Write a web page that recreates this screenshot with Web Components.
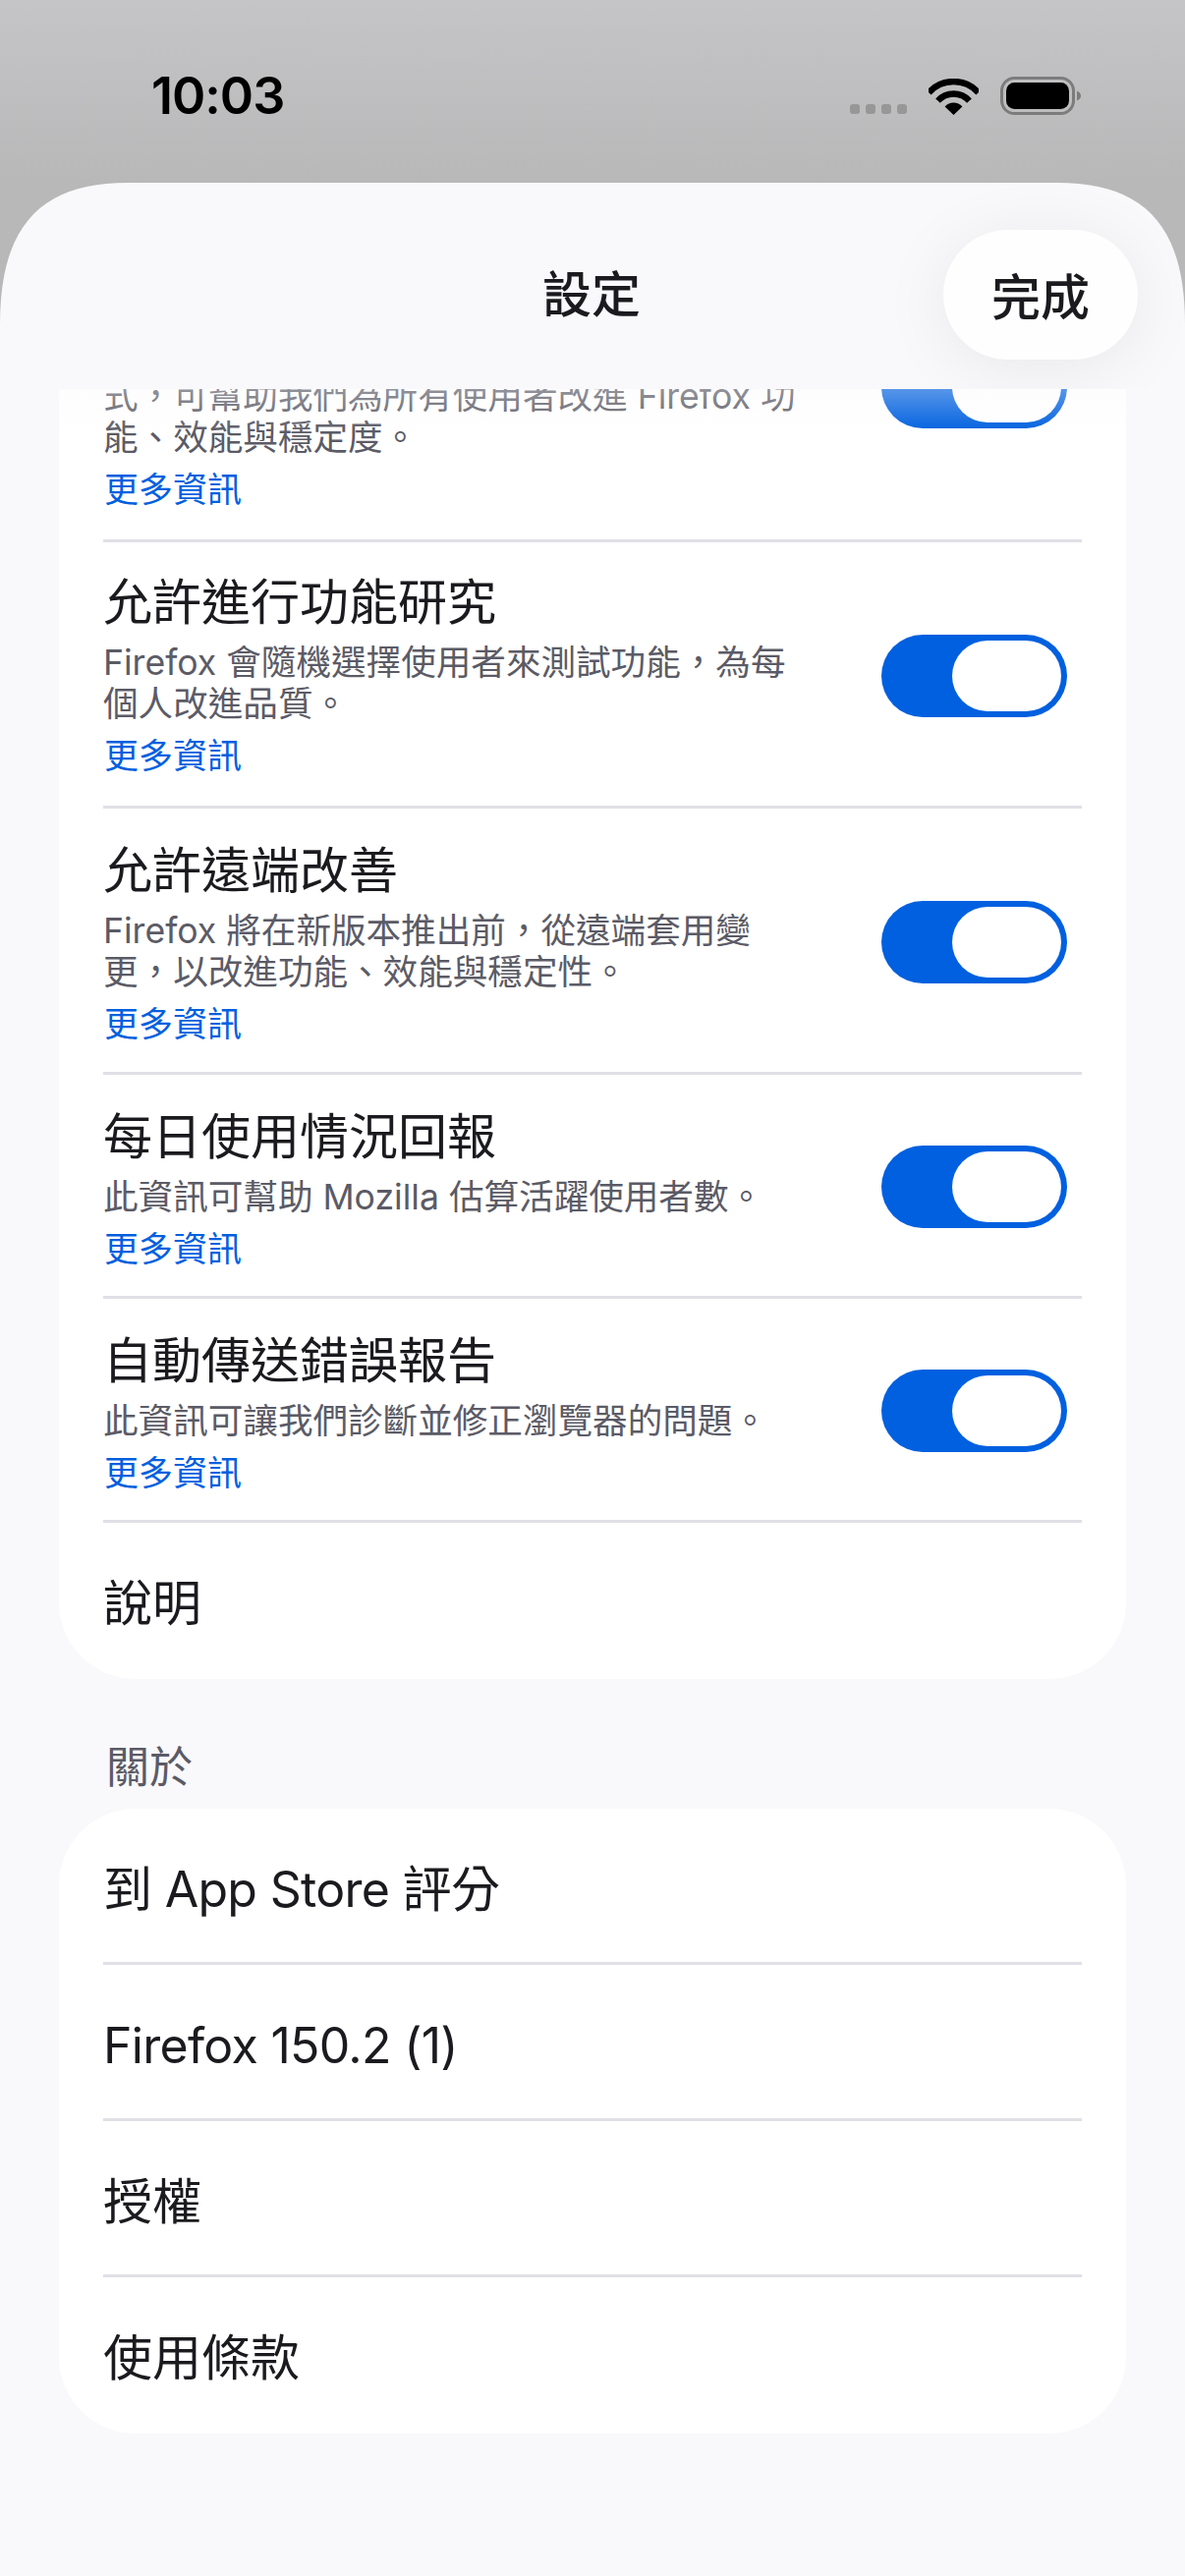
<!DOCTYPE html>
<html lang="zh-Hant">
<head>
<meta charset="utf-8">
<title>設定</title>
<style>
    html, body {
        margin: 0;
        height: 2622px;
        overflow: hidden;
    }

    body {
        display: flex;
        flex-direction: column;
        font-family: Inter, "Noto Sans CJK TC", sans-serif;
        color: #1b1b1f;
        background: linear-gradient(#c5c5c7, #b8b8b9 186px);
    }
</style>
</head>
<body>
<status-bar time="10:03"></status-bar>
<settings-sheet>
    <settings-card>
        <settings-row clipped high toggle>
            式，可幫助我們為所有使用者改進 Firefox 功<br>能、效能與穩定度。
        </settings-row>
        <settings-row high heading="允許進行功能研究" toggle>
            Firefox 會隨機選擇使用者來測試功能，為每<br>個人改進品質。
        </settings-row>
        <settings-row heading="允許遠端改善" toggle>
            Firefox 將在新版本推出前，從遠端套用變<br>更，以改進功能、效能與穩定性。
        </settings-row>
        <settings-row heading="每日使用情況回報" toggle short>
            此資訊可幫助 Mozilla 估算活躍使用者數。
        </settings-row>
        <settings-row heading="自動傳送錯誤報告" toggle short>
            此資訊可讓我們診斷並修正瀏覽器的問題。
        </settings-row>
        <settings-row heading="說明" last></settings-row>
    </settings-card>
    <section-label>關於</section-label>
    <settings-card>
        <settings-row first tight heading="到 App Store 評分"></settings-row>
        <settings-row tight heading="Firefox 150.2 (1)"></settings-row>
        <settings-row heading="授權"></settings-row>
        <settings-row heading="使用條款" last></settings-row>
    </settings-card>
</settings-sheet>

<script>
// status bar - clock, signal dots, wifi, battery
var template_status = document.createElement("template");
template_status.innerHTML = `
<div class="left"><span id="time"></span></div>
<div class="right">
    <div class="dots"><i></i><i></i><i></i><i></i></div>
    <svg width="51" height="37" viewBox="0 0 51 37">
        <path d="M.2 14.3A34 34 0 0 1 50.8 14.3" fill="none" stroke="#000" stroke-width="6.4"/>
        <path d="M9.5 22.6A21.5 21.5 0 0 1 41.5 22.6" fill="none" stroke="#000" stroke-width="6.4"/>
        <path d="M25.5 37L16.6 28.4A12 12 0 0 1 34.4 28.4Z" fill="#000"/>
    </svg>
    <svg class="battery" width="82" height="39" viewBox="0 0 82 39">
        <rect x="1.5" y="1.5" width="73" height="36" rx="13" fill="none" stroke="#7c7c7d" stroke-width="3"/>
        <rect x="6" y="6" width="64" height="27" rx="8.5" fill="#000"/>
        <path d="M78 14.5C80.5 15.5 82 17.2 82 19.5S80.5 23.5 78 24.5Z" fill="#7c7c7d"/>
    </svg>
</div>
<style>
    :host {
        display: flex;
        flex: none;
        justify-content: space-between;
        height: 186px;
        box-sizing: border-box;
        padding: 0 106px 0 154px;
    }
    .left {
        padding-top: 66px;
        font-size: 52px;
        line-height: 64px;
        font-weight: 600;
        letter-spacing: -1px;
        color: #000;
    }
    .right {
        display: flex;
        align-items: flex-end;
        height: 117px;
    }
    .dots {
        display: flex;
        gap: 6px;
        margin: 0 22px 1px 0;
    }
    .dots i {
        width: 10px;
        height: 10px;
        border-radius: 3px;
        background: #979798;
    }
    svg { display: block; }
    .battery { margin-left: 22px; }
</style>
`;

class StatusBar extends HTMLElement {
    constructor(){
        super();
        this.attachShadow({mode:"open"});
    }
    connectedCallback(){
        this.shadowRoot.appendChild(template_status.content.cloneNode(true));
        this.shadowRoot.querySelector("#time").textContent = this.getAttribute("time");
    }
}
customElements.define("status-bar", StatusBar);

// sheet - rounded panel with the header on top, list scrolled under it
var template_sheet = document.createElement("template");
template_sheet.innerHTML = `
<header>
    <div></div>
    <h1>設定</h1>
    <button>完成</button>
</header>
<div class="scroller">
    <div class="fade"></div>
    <div class="list"><slot></slot></div>
</div>
<style>
    :host {
        display: flex;
        flex-direction: column;
        flex: 1;
        min-height: 0;
        overflow: hidden;
        background: #f9f9fb;
        /* squircle top corners, border-radius is too round here */
        clip-path: path("M0 144C0 40 45 0 130 0H1076C1161 0 1206 40 1206 144V2436H0Z");
    }
    header {
        flex: none;
        display: grid;
        grid-template-columns: 1fr auto 1fr;
        align-items: center;
        height: 210px;
        box-sizing: border-box;
        padding: 48px 48px 30px;
        overflow: hidden;
    }
    h1 {
        margin: 0;
        padding-right: 2px;
        font-size: 50px;
        line-height: 60px;
        font-weight: 500;
    }
    button {
        justify-self: end;
        width: 198px;
        height: 132px;
        border: 0;
        padding: 0 0 2px;
        border-radius: 66px;
        background: #fefefe;
        color: inherit;
        font: inherit;
        font-size: 50px;
        font-weight: 500;
        box-shadow: 0 8px 70px rgba(0, 0, 0, .07);
    }
    .scroller {
        position: relative;
        flex: 1;
        min-height: 0;
        overflow: hidden;
    }
    .fade {
        position: absolute;
        z-index: 1;
        top: 0;
        left: 0;
        right: 0;
        height: 45px;
        background: linear-gradient(rgba(249, 249, 251, .35), rgba(249, 249, 251, 0));
    }
    .list {
        margin-top: -160px;
        padding: 0 60px;
    }
</style>
`;

class SettingsSheet extends HTMLElement {
    constructor(){
        super();
        this.attachShadow({mode:"open"});
    }
    connectedCallback(){
        this.shadowRoot.appendChild(template_sheet.content.cloneNode(true));
    }
}
customElements.define("settings-sheet", SettingsSheet);

// card - white group of rows
var template_card = document.createElement("template");
template_card.innerHTML = `
<slot></slot>
<style>
    :host {
        display: block;
        background: #fff;
        border-radius: 78px;
        padding: 0 45px;
    }
</style>
`;

class SettingsCard extends HTMLElement {
    constructor(){
        super();
        this.attachShadow({mode:"open"});
    }
    connectedCallback(){
        this.shadowRoot.appendChild(template_card.content.cloneNode(true));
    }
}
customElements.define("settings-card", SettingsCard);

// section title above a card
var template_label = document.createElement("template");
template_label.innerHTML = `
<slot></slot>
<style>
    :host {
        display: block;
        padding: 64px 0 16px 48px;
        font-size: 44px;
        line-height: 52px;
        color: #5b5b66;
    }
</style>
`;

class SectionLabel extends HTMLElement {
    constructor(){
        super();
        this.attachShadow({mode:"open"});
    }
    connectedCallback(){
        this.shadowRoot.appendChild(template_label.content.cloneNode(true));
    }
}
customElements.define("section-label", SectionLabel);

// switch - always on in this screen
var template_toggle = document.createElement("template");
template_toggle.innerHTML = `
<div class="knob"></div>
<style>
    :host {
        display: flex;
        justify-content: flex-end;
        align-items: center;
        flex: none;
        width: 189px;
        height: 84px;
        margin-top: 3px;
        box-sizing: border-box;
        padding: 6px;
        border-radius: 42px;
        background: #0060df;
    }
    .knob {
        width: 111px;
        height: 72px;
        border-radius: 36px;
        background: #fff;
    }
</style>
`;

class ToggleSwitch extends HTMLElement {
    constructor(){
        super();
        this.attachShadow({mode:"open"});
    }
    connectedCallback(){
        this.shadowRoot.appendChild(template_toggle.content.cloneNode(true));
    }
}
customElements.define("toggle-switch", ToggleSwitch);

// row - heading, description in the slot, link, optional switch
var template_row = document.createElement("template");
template_row.innerHTML = `
<div class="text">
    <div id="heading"></div>
    <div id="desc"><slot></slot></div>
    <div id="link">更多資訊</div>
</div>
<style>
    :host {
        display: flex;
        align-items: center;
        justify-content: space-between;
        border-top: 3px solid #e0e0e6;
        padding-right: 15px;
    }
    :host([first]), :host([clipped]) { border-top: 0; }
    .text {
        padding: 33px 0 28px;
    }
    :host([short]) .text { padding-bottom: 27px; }
    :host([high]) .text { padding: 31px 0 30px; }
    :host([clipped]) .text { padding-top: 136px; }
    #heading {
        font-size: 50px;
        line-height: 60px;
    }
    :host([tight]) #heading { letter-spacing: -.7px; }
    #desc {
        margin-top: 11px;
        font-size: 35.6px;
        line-height: 42px;
        color: #5b5b66;
    }
    #link {
        margin: 10px 0 0 1px;
        font-size: 35px;
        line-height: 42px;
        color: #0060df;
    }
    :host(:not([toggle])) .text { padding: 52px 0 44px; }
    :host([last]) .text { padding-bottom: 47px; }
    :host(:not([toggle])) #desc, :host(:not([toggle])) #link { display: none; }
    :host([clipped]) #heading { display: none; }
</style>
`;

class SettingsRow extends HTMLElement {
    constructor(){
        super();
        this.attachShadow({mode:"open"});
    }
    connectedCallback(){
        this.shadowRoot.appendChild(template_row.content.cloneNode(true));
        this.shadowRoot.querySelector("#heading").textContent = this.getAttribute("heading") || "";
        if (this.hasAttribute("toggle")) {
            this.shadowRoot.appendChild(document.createElement("toggle-switch"));
        }
    }
}
customElements.define("settings-row", SettingsRow);
</script>
</body>
</html>
